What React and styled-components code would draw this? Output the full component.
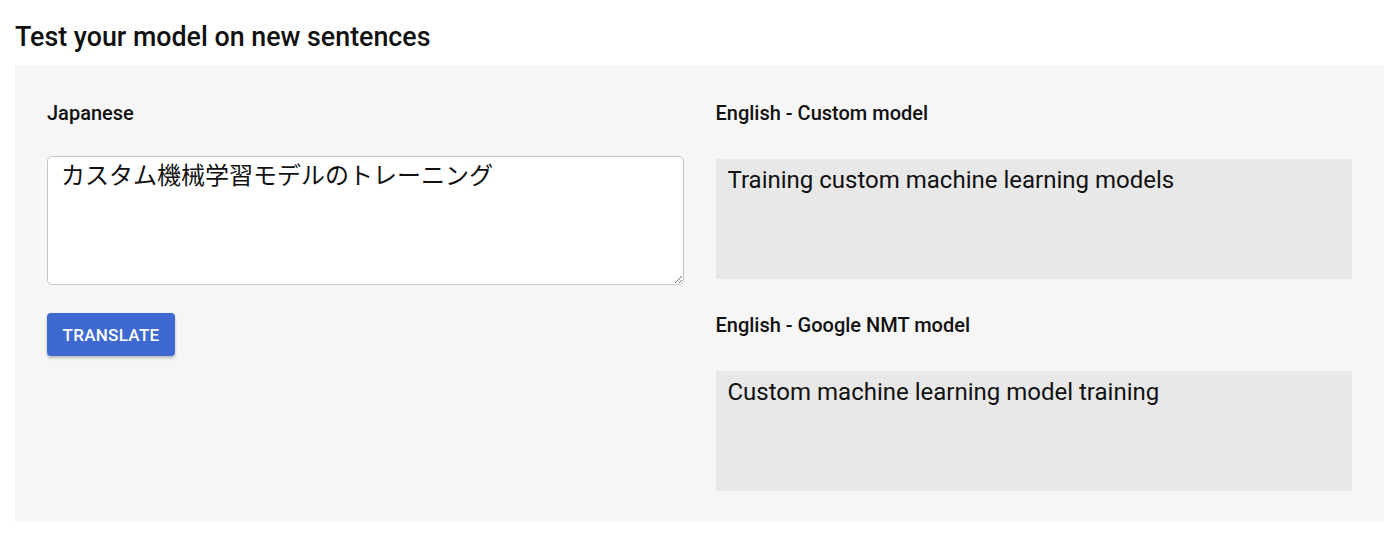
import React from 'react'
import styled, { createGlobalStyle } from 'styled-components'

const GlobalStyle = createGlobalStyle`
    body {
        margin: 0;
        background: #fff;
        font-family: Roboto, "Noto Sans CJK JP", sans-serif;
        color: #202124;
    }
`

const App = () => {
  return (
    <Page>
        <GlobalStyle />
        <Title>Test your model on new sentences</Title>
        <Panel>
            <Column>
                <Label>Japanese</Label>
                <Input defaultValue="カスタム機械学習モデルのトレーニング" />
                <Button>Translate</Button>
            </Column>
            <Column>
                <Label>English - Custom model</Label>
                <Output>Training custom machine learning models</Output>
                <Label $spaced>English - Google NMT model</Label>
                <Output>Custom machine learning model training</Output>
            </Column>
        </Panel>
    </Page>
  )
}

export default App

const Page = styled.div`
    padding: 0 16px 0 15px;
`

const Title = styled.h2`
    margin: 0;
    padding-top: 22px;
    height: 65px;
    box-sizing: border-box;
    font-size: 26.8px;
    line-height: 30px;
    font-weight: 500;
    color: #111;
`

const Panel = styled.div`
    background: #f6f6f6;
    height: 456px;
    box-sizing: border-box;
    padding: 36px 32px 0;
    display: grid;
    grid-template-columns: 1fr 1fr;
    column-gap: 32px;
    align-items: start;
`

const Column = styled.div`
    display: flex;
    flex-direction: column;
    align-items: flex-start;
`

const Label = styled.div`
    font-size: 20px;
    line-height: 24px;
    font-weight: 500;
    color: #111;
    margin-top: ${p => (p.$spaced ? '34px' : '0')};
`

const Input = styled.textarea`
    margin-top: 31px;
    width: 100%;
    height: 129px;
    box-sizing: border-box;
    padding: 3px 13px;
    border: 1px solid #c6c6c6;
    border-radius: 5px;
    background: #fff;
    font-family: Roboto, "Noto Sans CJK JP", sans-serif;
    font-size: 24px;
    line-height: 32px;
    color: #111;
    resize: vertical;
    outline: none;
`

const Button = styled.button`
    margin-top: 28px;
    height: 43px;
    padding: 0;
    width: 128px;
    border: none;
    border-radius: 4px;
    background: #3d69d1;
    color: #fff;
    font-family: Roboto, sans-serif;
    font-size: 17px;
    font-weight: 500;
    text-transform: uppercase;
    letter-spacing: 0.3px;
    box-shadow: 0 2px 3px rgba(0, 0, 0, 0.25);
    cursor: pointer;
`

const Output = styled.div`
    margin-top: 34px;
    width: 100%;
    height: 120px;
    box-sizing: border-box;
    padding: 7px 12px;
    background: #e8e8e8;
    font-size: 24px;
    line-height: 28px;
    color: #111;
`
